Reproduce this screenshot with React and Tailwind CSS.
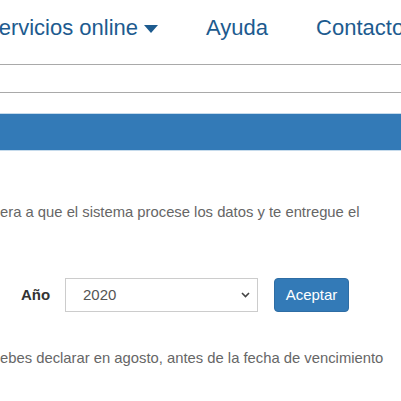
export default function App() {
  return (
    <div className="w-[401px] h-[401px] overflow-hidden bg-white font-['Liberation_Sans',Arial,sans-serif]">
      {/* top nav */}
      <div className="h-[65px] pt-[17px] border-b border-[#a9a9a9]">
        <nav className="flex items-start gap-[48px] ml-[-16px] text-[22px] leading-[22px] text-[#1d5b8f] whitespace-nowrap">
          <span className="flex items-center gap-[6px]">
            Servicios online
            <svg width="14" height="8" viewBox="0 0 14 8" className="mt-[2px]">
              <path d="M0 0 H14 L7 8 Z" fill="#1d5b8f" />
            </svg>
          </span>
          <span>Ayuda</span>
          <span>Contacto</span>
        </nav>
      </div>
      <div className="h-[28px] border-b border-[#a9a9a9]" />

      {/* title bar */}
      <div className="mt-[20px] h-[38px] bg-[#337ab7] border-y border-[#c6dbec]" />

      {/* content */}
      <p className="mt-[51px] text-[14.8px] leading-[20px] text-[#666] whitespace-nowrap">
        era a que el sistema procese los datos y te entregue el
      </p>

      <div className="mt-[56px] flex items-center h-[34px]">
        <label className="ml-[21px] w-[44px] text-[15px] font-bold text-[#333]">Año</label>
        <div className="relative w-[193px] h-[34px]">
          <select
            defaultValue="2020"
            className="appearance-none w-full h-full border border-[#ccc] bg-white pl-[17px] text-[15px] text-[#555] outline-none"
          >
            <option>2020</option>
            <option>2019</option>
            <option>2018</option>
          </select>
          <svg width="9" height="6" viewBox="0 0 9 6" className="absolute right-[8px] top-[14px] pointer-events-none">
            <path d="M1 1 L4.5 4.5 L8 1" fill="none" stroke="#444" strokeWidth="1.6" />
          </svg>
        </div>
        <button className="ml-[16px] w-[75px] h-[34px] rounded-[4px] bg-[#337ab7] border border-[#2e6da4] text-white text-[15px]">
          Aceptar
        </button>
      </div>

      <p className="mt-[36px] text-[14.8px] leading-[20px] text-[#666] whitespace-nowrap">
        ebes declarar en agosto, antes de la fecha de vencimiento
      </p>
    </div>
  );
}
